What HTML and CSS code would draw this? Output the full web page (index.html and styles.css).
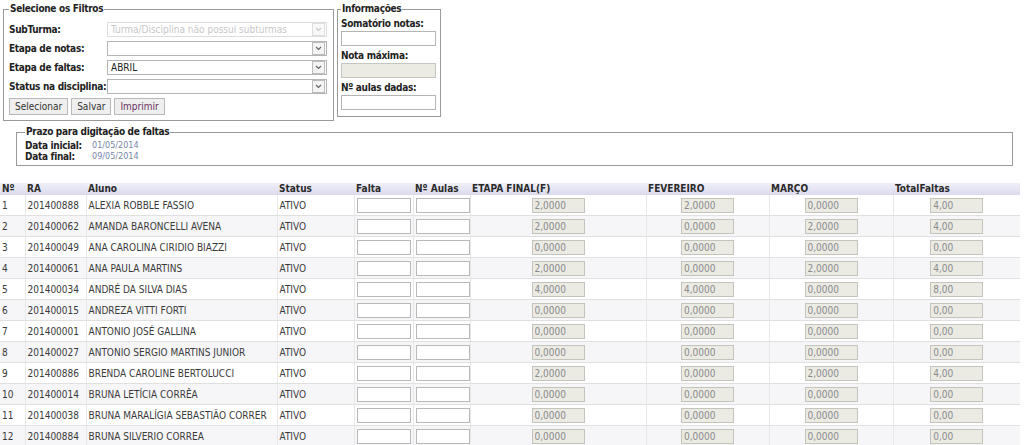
FILE: index.html
```html
<!DOCTYPE html>
<html lang="pt-BR">
<head>
<meta charset="utf-8">
<title>Digitação de faltas</title>
<link rel="stylesheet" href="styles.css">
</head>
<body>
<div class="top">
  <fieldset class="box filtros">
    <legend>Selecione os Filtros</legend>
    <div class="frow">
      <label class="flabel">SubTurma:</label>
      <span class="sel is-disabled"><select disabled><option>Turma/Disciplina não possui subturmas</option></select><span class="arrow"><svg width="7" height="5" viewBox="0 0 7 5"><path d="M1 1 L3.5 3.5 L6 1" fill="none" stroke="#c8c8c8" stroke-width="1.2"/></svg></span></span>
    </div>
    <div class="frow">
      <label class="flabel">Etapa de notas:</label>
      <span class="sel"><select><option></option></select><span class="arrow"><svg width="7" height="5" viewBox="0 0 7 5"><path d="M1 1 L3.5 3.5 L6 1" fill="none" stroke="#666" stroke-width="1.2"/></svg></span></span>
    </div>
    <div class="frow">
      <label class="flabel">Etapa de faltas:</label>
      <span class="sel"><select><option>ABRIL</option></select><span class="arrow"><svg width="7" height="5" viewBox="0 0 7 5"><path d="M1 1 L3.5 3.5 L6 1" fill="none" stroke="#666" stroke-width="1.2"/></svg></span></span>
    </div>
    <div class="frow">
      <label class="flabel">Status na disciplina:</label>
      <span class="sel"><select><option></option></select><span class="arrow"><svg width="7" height="5" viewBox="0 0 7 5"><path d="M1 1 L3.5 3.5 L6 1" fill="none" stroke="#666" stroke-width="1.2"/></svg></span></span>
    </div>
    <div class="btns">
      <button class="btn">Selecionar</button>
      <button class="btn">Salvar</button>
      <button class="btn btn-print">Imprimir</button>
    </div>
  </fieldset>
  <fieldset class="box info">
    <legend>Informações</legend>
    <label class="ilabel ilabel-first">Somatório notas:</label>
    <input class="iinput" type="text">
    <label class="ilabel">Nota máxima:</label>
    <input class="iinput" type="text" disabled>
    <label class="ilabel">Nº aulas dadas:</label>
    <input class="iinput" type="text">
  </fieldset>
</div>

<fieldset class="box prazo">
  <legend>Prazo para digitação de faltas</legend>
  <div class="prow"><span class="plabel">Data inicial:</span><span class="pval">01/05/2014</span></div>
  <div class="prow"><span class="plabel">Data final:</span><span class="pval">09/05/2014</span></div>
</fieldset>

<table class="grid">
  <colgroup>
    <col class="c-n"><col class="c-ra"><col class="c-al"><col class="c-st"><col class="c-fa"><col class="c-au"><col class="c-et"><col class="c-fe"><col class="c-ma"><col class="c-to">
  </colgroup>
  <thead>
    <tr><th>Nº</th><th>RA</th><th>Aluno</th><th>Status</th><th>Falta</th><th>Nº Aulas</th><th>ETAPA FINAL(F)</th><th>FEVEREIRO</th><th>MARÇO</th><th>TotalFaltas</th></tr>
  </thead>
  <tbody>
    <tr><td>1</td><td>201400888</td><td>ALEXIA ROBBLE FASSIO</td><td>ATIVO</td><td><input class="ed"></td><td><input class="ed"></td><td class="ctr"><input class="ro" value="2,0000" disabled></td><td class="ctr"><input class="ro" value="2,0000" disabled></td><td class="ctr"><input class="ro" value="0,0000" disabled></td><td class="ctr"><input class="ro" value="4,00" disabled></td></tr>
    <tr><td>2</td><td>201400062</td><td>AMANDA BARONCELLI AVENA</td><td>ATIVO</td><td><input class="ed"></td><td><input class="ed"></td><td class="ctr"><input class="ro" value="2,0000" disabled></td><td class="ctr"><input class="ro" value="0,0000" disabled></td><td class="ctr"><input class="ro" value="2,0000" disabled></td><td class="ctr"><input class="ro" value="4,00" disabled></td></tr>
    <tr><td>3</td><td>201400049</td><td>ANA CAROLINA CIRIDIO BIAZZI</td><td>ATIVO</td><td><input class="ed"></td><td><input class="ed"></td><td class="ctr"><input class="ro" value="0,0000" disabled></td><td class="ctr"><input class="ro" value="0,0000" disabled></td><td class="ctr"><input class="ro" value="0,0000" disabled></td><td class="ctr"><input class="ro" value="0,00" disabled></td></tr>
    <tr><td>4</td><td>201400061</td><td>ANA PAULA MARTINS</td><td>ATIVO</td><td><input class="ed"></td><td><input class="ed"></td><td class="ctr"><input class="ro" value="2,0000" disabled></td><td class="ctr"><input class="ro" value="0,0000" disabled></td><td class="ctr"><input class="ro" value="2,0000" disabled></td><td class="ctr"><input class="ro" value="4,00" disabled></td></tr>
    <tr><td>5</td><td>201400034</td><td>ANDRÉ DA SILVA DIAS</td><td>ATIVO</td><td><input class="ed"></td><td><input class="ed"></td><td class="ctr"><input class="ro" value="4,0000" disabled></td><td class="ctr"><input class="ro" value="4,0000" disabled></td><td class="ctr"><input class="ro" value="0,0000" disabled></td><td class="ctr"><input class="ro" value="8,00" disabled></td></tr>
    <tr><td>6</td><td>201400015</td><td>ANDREZA VITTI FORTI</td><td>ATIVO</td><td><input class="ed"></td><td><input class="ed"></td><td class="ctr"><input class="ro" value="0,0000" disabled></td><td class="ctr"><input class="ro" value="0,0000" disabled></td><td class="ctr"><input class="ro" value="0,0000" disabled></td><td class="ctr"><input class="ro" value="0,00" disabled></td></tr>
    <tr><td>7</td><td>201400001</td><td>ANTONIO JOSÉ GALLINA</td><td>ATIVO</td><td><input class="ed"></td><td><input class="ed"></td><td class="ctr"><input class="ro" value="0,0000" disabled></td><td class="ctr"><input class="ro" value="0,0000" disabled></td><td class="ctr"><input class="ro" value="0,0000" disabled></td><td class="ctr"><input class="ro" value="0,00" disabled></td></tr>
    <tr><td>8</td><td>201400027</td><td>ANTONIO SERGIO MARTINS JUNIOR</td><td>ATIVO</td><td><input class="ed"></td><td><input class="ed"></td><td class="ctr"><input class="ro" value="0,0000" disabled></td><td class="ctr"><input class="ro" value="0,0000" disabled></td><td class="ctr"><input class="ro" value="0,0000" disabled></td><td class="ctr"><input class="ro" value="0,00" disabled></td></tr>
    <tr><td>9</td><td>201400886</td><td>BRENDA CAROLINE BERTOLUCCI</td><td>ATIVO</td><td><input class="ed"></td><td><input class="ed"></td><td class="ctr"><input class="ro" value="2,0000" disabled></td><td class="ctr"><input class="ro" value="0,0000" disabled></td><td class="ctr"><input class="ro" value="2,0000" disabled></td><td class="ctr"><input class="ro" value="4,00" disabled></td></tr>
    <tr><td>10</td><td>201400014</td><td>BRUNA LETÍCIA CORRÊA</td><td>ATIVO</td><td><input class="ed"></td><td><input class="ed"></td><td class="ctr"><input class="ro" value="0,0000" disabled></td><td class="ctr"><input class="ro" value="0,0000" disabled></td><td class="ctr"><input class="ro" value="0,0000" disabled></td><td class="ctr"><input class="ro" value="0,00" disabled></td></tr>
    <tr><td>11</td><td>201400038</td><td>BRUNA MARALÍGIA SEBASTIÃO CORRER</td><td>ATIVO</td><td><input class="ed"></td><td><input class="ed"></td><td class="ctr"><input class="ro" value="0,0000" disabled></td><td class="ctr"><input class="ro" value="0,0000" disabled></td><td class="ctr"><input class="ro" value="0,0000" disabled></td><td class="ctr"><input class="ro" value="0,00" disabled></td></tr>
    <tr><td>12</td><td>201400884</td><td>BRUNA SILVERIO CORREA</td><td>ATIVO</td><td><input class="ed"></td><td><input class="ed"></td><td class="ctr"><input class="ro" value="0,0000" disabled></td><td class="ctr"><input class="ro" value="0,0000" disabled></td><td class="ctr"><input class="ro" value="0,0000" disabled></td><td class="ctr"><input class="ro" value="0,00" disabled></td></tr>
  </tbody>
</table>
</body>
</html>
```
FILE: styles.css
```css
html, body {
  margin: 0;
  background: #fff;
}
body {
  padding-top: 3px;
  font-family: "DejaVu Sans Condensed", "DejaVu Sans", sans-serif;
  font-size: 10px;
  color: #222;
}

.top {
  display: flex;
  align-items: flex-start;
}

.box {
  margin: 0;
  border: 1px solid #9a9a9a;
  min-width: 0;
}
.box legend {
  font-weight: bold;
  font-size: 10px;
  line-height: 12px;
  letter-spacing: -0.3px;
  padding: 0 1px;
  color: #222;
}

.filtros {
  box-sizing: border-box;
  width: 331px;
  margin-left: 3px;
  padding: 7px 5px 5px 5px;
}
.frow {
  display: flex;
  align-items: center;
  height: 15px;
  margin-bottom: 4px;
}
.flabel {
  flex: 0 0 98px;
  font-weight: bold;
  letter-spacing: -0.3px;
  white-space: nowrap;
}
.sel {
  position: relative;
  display: block;
  width: 220px;
  height: 15px;
}
.sel select {
  -webkit-appearance: none;
  appearance: none;
  box-sizing: border-box;
  width: 220px;
  height: 15px;
  margin: 0;
  padding: 0 0 0 3px;
  border: 1px solid #b4b4b4;
  border-radius: 0;
  background: #fff;
  font-family: inherit;
  font-size: 10px;
  line-height: 13px;
  color: #222;
}
.sel.is-disabled select {
  color: #b0b0b0;
  border-color: #cfcfcf;
}
.arrow {
  position: absolute;
  right: 2px;
  top: 1px;
  width: 11px;
  height: 11px;
  border: 1px solid #bcbcbc;
  background: #f4f4f4;
  display: flex;
  align-items: center;
  justify-content: center;
}
.is-disabled .arrow {
  border-color: #dedede;
  background: #f8f8f8;
}

.btns {
  display: flex;
  gap: 3px;
  margin-top: 3px;
}
.btn {
  box-sizing: border-box;
  height: 17px;
  margin: 0;
  padding: 0 5px;
  border: 1px solid #b8b8b8;
  border-radius: 0;
  background: #efefef;
  font-family: inherit;
  font-size: 10px;
  color: #333;
}
.btn-print {
  color: #6a2f62;
}

.info {
  box-sizing: border-box;
  width: 104px;
  margin-left: 3px;
  padding: 0 4px 6px 3px;
}
.ilabel {
  display: block;
  font-weight: bold;
  letter-spacing: -0.3px;
  line-height: 12px;
  margin-top: 4px;
  margin-bottom: 1px;
}
.ilabel-first {
  margin-top: 3px;
  margin-bottom: 1px;
}
.iinput {
  display: block;
  box-sizing: border-box;
  width: 95px;
  height: 15px;
  margin: 0;
  border: 1px solid #b4b4b4;
  background: #fff;
  font-family: inherit;
  font-size: 10px;
  padding: 0 2px;
}
.iinput:disabled {
  background: #ebebe4;
  border-color: #c6c6c0;
}

.prazo {
  box-sizing: border-box;
  margin: 5px 11px 0 16px;
  padding: 2px 8px 3px 8px;
}
.prow {
  display: flex;
  line-height: 11px;
}
.plabel {
  width: 67px;
  font-weight: bold;
  letter-spacing: -0.3px;
}
.pval {
  color: #7785a8;
  font-size: 9px;
}

.grid {
  margin-top: 17px;
  width: 1019px;
  border-collapse: collapse;
  table-layout: fixed;
  color: #3a3a3a;
}
.c-n { width: 25px; }
.c-ra { width: 61px; }
.c-al { width: 191px; }
.c-st { width: 77px; }
.c-fa { width: 59px; }
.c-au { width: 57px; }
.c-et { width: 176px; }
.c-fe { width: 123px; }
.c-ma { width: 124px; }
.c-to { width: 127px; }

.grid thead tr {
  background: linear-gradient(#f0f0f9, #dadaee);
}
.grid th {
  height: 12px;
  padding: 0 2px;
  line-height: 12px;
  text-align: left;
  font-weight: bold;
  color: #2a2a2a;
  white-space: nowrap;
}
.grid td {
  height: 20px;
  padding: 0 2px;
  border-right: 1px solid #e8e8e8;
  border-bottom: 1px solid #e0e0e0;
  white-space: nowrap;
  overflow: hidden;
}
.grid td:last-child {
  border-right: 0;
}
.grid tbody tr:nth-child(even) td {
  background: #f6f6f8;
}
.grid td.ctr {
  text-align: center;
}
.ed {
  display: block;
  box-sizing: border-box;
  width: 54px;
  height: 15px;
  margin: 0;
  border: 1px solid #b9b9b9;
  background: #fff;
  padding: 0 2px;
  font-family: inherit;
  font-size: 10px;
}
.ro {
  box-sizing: border-box;
  width: 53px;
  height: 15px;
  margin: 0;
  vertical-align: middle;
  border: 1px solid #c4c4bc;
  background: #ebebe4;
  padding: 0 2px;
  font-family: inherit;
  font-size: 10px;
  color: #8a8a8a;
  -webkit-text-fill-color: #8a8a8a;
  opacity: 1;
}
```
